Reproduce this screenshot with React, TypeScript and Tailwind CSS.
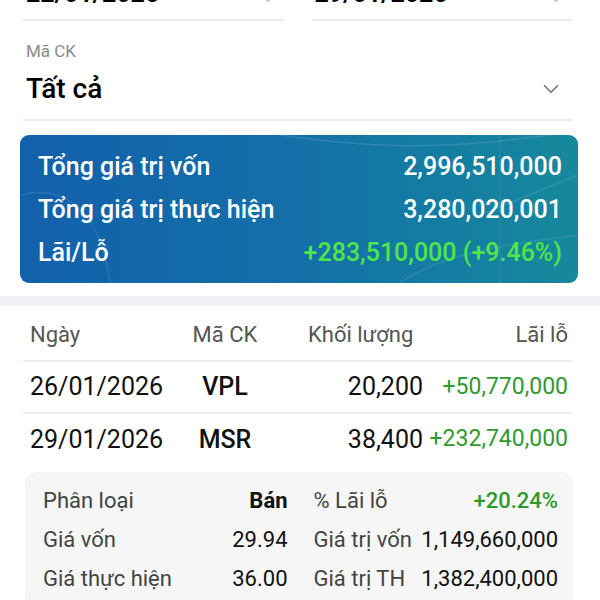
import { ChevronDown } from 'lucide-react';

const trades = [
  { date: '26/01/2026', code: 'VPL', volume: '20,200', pnl: '+50,770,000' },
  { date: '29/01/2026', code: 'MSR', volume: '38,400', pnl: '+232,740,000' },
];

function DateField({ value }: { value: string }) {
  return (
    <div className="flex flex-1 items-start justify-between border-b-2 border-[#ebebeb] h-[45px]">
      <span className="pl-[3px] pt-[6px] text-[25px] leading-[24px] font-bold text-black">{value}</span>
      <ChevronDown className="mr-[6px] mt-[13px] text-[#c4c4c4]" size={20} strokeWidth={1.5} />
    </div>
  );
}

function SummaryRow({ label, value, green }: { label: string; value: string; green?: boolean }) {
  return (
    <div className="flex h-[43px] items-center justify-between">
      <span className="text-[25px] font-medium text-white">{label}</span>
      <span className={green ? 'text-[25px] font-medium text-[#4fe64a]' : 'text-[25px] font-medium text-white'}>{value}</span>
    </div>
  );
}

function DetailCell({ label, value, valueClass }: { label: string; value: string; valueClass?: string }) {
  return (
    <div className="flex h-[39px] items-center justify-between">
      <span className="text-[22px] text-[#444444]">{label}</span>
      <span className={valueClass ?? 'text-[22px] text-[#111111]'}>{value}</span>
    </div>
  );
}

export default function App() {
  return (
    <div className="h-[600px] w-[600px] overflow-hidden bg-white font-['Roboto',sans-serif]">
      {/* filters */}
      <div className="pl-[23px] pr-[28px]">
        <div className="-mt-[24px] flex gap-[28px]">
          <DateField value="22/01/2026" />
          <DateField value="29/01/2026" />
        </div>
        <div className="border-b-2 border-[#ebebeb] pb-[14px]">
          <div className="mt-[20px] pl-[3px] text-[17px] leading-[20px] text-[#8a8a8a]">Mã CK</div>
          <div className="mt-[12px] flex h-[32px] items-center justify-between">
            <span className="pl-[3px] text-[28px] font-medium text-black">Tất cả</span>
            <ChevronDown className="mr-[8px] text-[#777777]" size={26} strokeWidth={1.6} />
          </div>
        </div>
      </div>

      {/* summary card */}
      <div className="relative ml-[20px] mr-[22px] mt-[14px] h-[148px] overflow-hidden rounded-[9px] bg-gradient-to-r from-[#1360ab] via-[#1470a8] to-[#17899c] pl-[18px] pr-[16px] pt-[10px]">
        <svg className="pointer-events-none absolute inset-0 h-full w-full" viewBox="0 0 558 148" preserveAspectRatio="none">
          <path d="M260 0 C 330 10, 420 20, 558 -5" stroke="rgba(255,255,255,0.12)" strokeWidth="1.5" fill="none" />
          <path d="M0 60 C 40 50, 80 70, 90 148" stroke="rgba(255,255,255,0.1)" strokeWidth="1.5" fill="none" />
          <path d="M380 148 C 420 120, 480 110, 558 100" stroke="rgba(255,255,255,0.1)" strokeWidth="1.5" fill="none" />
          <line x1="480" y1="0" x2="480" y2="148" stroke="rgba(255,255,255,0.08)" strokeWidth="1.5" />
          <path d="M460 80 L 558 40" stroke="rgba(255,255,255,0.1)" strokeWidth="1.5" />
        </svg>
        <div className="relative">
          <SummaryRow label="Tổng giá trị vốn" value="2,996,510,000" />
          <SummaryRow label="Tổng giá trị thực hiện" value="3,280,020,001" />
          <SummaryRow label="Lãi/Lỗ" value="+283,510,000 (+9.46%)" green />
        </div>
      </div>

      <div className="mt-[13px] h-[10px] bg-[#f0f0f4]" />

      {/* trades table */}
      <div className="pl-[23px] pr-[28px]">
        <div className="flex items-center border-b-2 border-[#ededed] pb-[13px] pl-[7px] pr-[4px] pt-[17px] text-[22px] leading-[24px] text-[#555555]">
          <span className="w-[155px]">Ngày</span>
          <span className="w-[80px] text-center">Mã CK</span>
          <span className="w-[158px] pl-[43px]">Khối lượng</span>
          <span className="flex-1 text-right">Lãi lỗ</span>
        </div>
        {trades.map((t, i) => (
          <div
            key={t.date}
            className={
              i === 0
                ? 'flex h-[52px] items-center border-b-2 border-[#ededed] pl-[7px] pr-[4px] text-[25px] text-[#111111]'
                : 'flex h-[51px] items-center pl-[7px] pr-[4px] text-[25px] text-[#111111]'
            }
          >
            <span className="w-[155px]">{t.date}</span>
            <span className="w-[80px] text-center font-medium">{t.code}</span>
            <span className="w-[158px] text-right">{t.volume}</span>
            <span className="flex-1 text-right text-[23px] text-[#2f9a2f]">{t.pnl}</span>
          </div>
        ))}

        {/* detail */}
        <div className="-mr-[1px] ml-[2px] mt-[7px] rounded-[12px] bg-[#f6f6f6] pb-[10px] pl-[18px] pr-[15px] pt-[9px]">
          <div className="grid grid-cols-2 gap-x-[26px]">
            <DetailCell label="Phân loại" value="Bán" valueClass="text-[22px] font-bold text-[#111111]" />
            <DetailCell label="% Lãi lỗ" value="+20.24%" valueClass="text-[22px] font-medium text-[#2f9a2f]" />
            <DetailCell label="Giá vốn" value="29.94" />
            <DetailCell label="Giá trị vốn" value="1,149,660,000" />
            <DetailCell label="Giá thực hiện" value="36.00" />
            <DetailCell label="Giá trị TH" value="1,382,400,000" />
          </div>
        </div>
      </div>
    </div>
  );
}
